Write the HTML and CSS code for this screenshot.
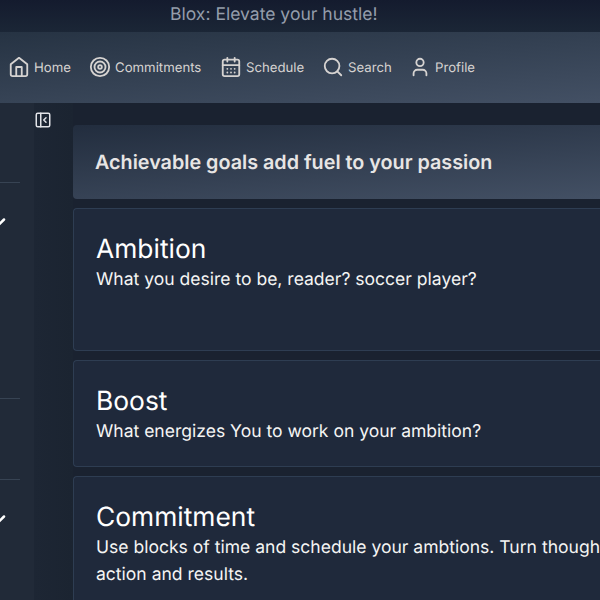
FILE: index.html
```html
<!DOCTYPE html>
<html lang="en">
<head>
<meta charset="utf-8">
<title>Blox</title>
<link rel="stylesheet" href="styles.css">
</head>
<body>
<header class="top"><span class="tagline">Blox: Elevate your hustle!</span></header>
<nav class="nav">
  <a class="link home"><svg class="icon" viewBox="0 0 24 24"><path d="M3 9l9-7 9 7v11a2 2 0 0 1-2 2H5a2 2 0 0 1-2-2z"/><path d="M9 22V12h6v10"/></svg><span>Home</span></a>
  <a class="link commitments"><svg class="icon" viewBox="0 0 24 24"><circle cx="12" cy="12" r="10"/><circle cx="12" cy="12" r="6"/><circle cx="12" cy="12" r="2"/></svg><span>Commitments</span></a>
  <a class="link schedule"><svg class="icon" viewBox="0 0 24 24"><rect x="3" y="4" width="18" height="18" rx="2"/><path d="M16 2v4M8 2v4M3 10h18M8 14h.01M12 14h.01M16 14h.01M8 18h.01M12 18h.01M16 18h.01"/></svg><span>Schedule</span></a>
  <a class="link search"><svg class="icon" viewBox="0 0 24 24"><circle cx="11" cy="11" r="8"/><path d="m21 21-4.3-4.3"/></svg><span>Search</span></a>
  <a class="link profile"><svg class="icon" viewBox="0 0 24 24"><path d="M19 21v-2a4 4 0 0 0-4-4H9a4 4 0 0 0-4 4v2"/><circle cx="12" cy="7" r="4"/></svg><span>Profile</span></a>
</nav>
<div class="body">
  <aside class="side">
    <div class="section first"></div>
    <div class="section second"><svg class="chevron" viewBox="0 0 24 24"><path d="m6 9 6 6 6-6"/></svg></div>
    <div class="section third"></div>
    <div class="section last"><svg class="chevron" viewBox="0 0 24 24"><path d="m6 9 6 6 6-6"/></svg></div>
  </aside>
  <div class="rail"><svg class="toggle" viewBox="0 0 24 24"><rect x="3" y="3" width="18" height="18" rx="2"/><path d="M9 3v18M16 15l-3-3 3-3"/></svg></div>
  <main class="main">
    <h1 class="banner"><span>Achievable goals add fuel to your passion</span></h1>
    <section class="card ambition"><h2>Ambition</h2><p>What you desire to be, reader? soccer player?</p></section>
    <section class="card boost"><h2>Boost</h2><p>What energizes You to work on your ambition?</p></section>
    <section class="card commitment"><h2>Commitment</h2><p>Use blocks of time and schedule your ambtions. Turn though<br>action and results.</p></section>
  </main>
</div>
</body>
</html>
```
FILE: styles.css
```css
* { box-sizing: border-box; margin: 0; padding: 0; }
body {
  width: 600px;
  height: 600px;
  overflow: hidden;
  display: flex;
  flex-direction: column;
  font-family: Inter, "Liberation Sans", sans-serif;
  text-rendering: geometricPrecision;
  color: #f5f5f4;
  background: #1a2230;
}
svg { fill: none; stroke: currentColor; stroke-width: 2; stroke-linecap: round; stroke-linejoin: round; flex: none; }
.top {
  height: 32px;
  flex: none;
  padding-left: 170px;
  background: linear-gradient(#141b2e, #1b2636);
  color: #949dab;
  font-size: 17.55px;
  line-height: 30px;
  white-space: nowrap;
}
.nav {
  height: 71px;
  flex: none;
  display: flex;
  align-items: center;
  padding: 0 0 1px 8px;
  background: linear-gradient(175deg, #263343, #435064);
  color: #d6d3d1;
  font-size: 13.2px;
}
.link { display: flex; align-items: center; gap: 4px; white-space: nowrap; }
.link span { line-height: 18px; padding-top: 2px; }
.icon { width: 22px; height: 22px; }
.home { width: 81px; }
.commitments { width: 131px; }
.schedule { width: 102px; }
.search { width: 87px; }
.body { flex: 1; display: flex; min-height: 0; }
.side { width: 34px; flex: none; background: #212a38; overflow: hidden; }
.section { width: 20px; border-bottom: 1px solid #374353; }
.first { height: 80px; }
.second { height: 216px; padding-top: 29px; }
.third { height: 81px; }
.last { padding-top: 29px; border-bottom: 0; }
.chevron { display: block; width: 20px; height: 20px; margin-left: -11px; color: #fff; stroke-width: 3; }
.rail { width: 39px; flex: none; padding-top: 8px; background: linear-gradient(90deg, #1d2634, #1b2431); }
.toggle { display: block; width: 18px; height: 18px; color: #e2e3e8; }
.main {
  flex: 1;
  min-width: 0;
  padding-top: 22px;
  display: flex;
  flex-direction: column;
  gap: 9px;
}
.banner {
  height: 74px;
  flex: none;
  display: flex;
  align-items: center;
  padding-left: 22px;
  border-radius: 4px 0 0 4px;
  background: linear-gradient(175deg, #222d3e, #435064);
  color: #e7e5e4;
  font-size: 19.75px;
  font-weight: 600;
  white-space: nowrap;
}
.card {
  flex: none;
  padding: 23px 0 0 22px;
  border: 1px solid #2e3d52;
  border-right: 0;
  border-radius: 4px 0 0 4px;
  background: #1f293b;
  overflow: hidden;
  white-space: nowrap;
}
.ambition { height: 143px; }
.boost { height: 107px; }
.commitment { flex: 1; min-height: 0; border-bottom: 0; border-radius: 4px 0 0 0; }
h2 { font-size: 26.4px; line-height: 34px; font-weight: 400; color: #fff; }
p { font-size: 17.55px; line-height: 27px; }
```
